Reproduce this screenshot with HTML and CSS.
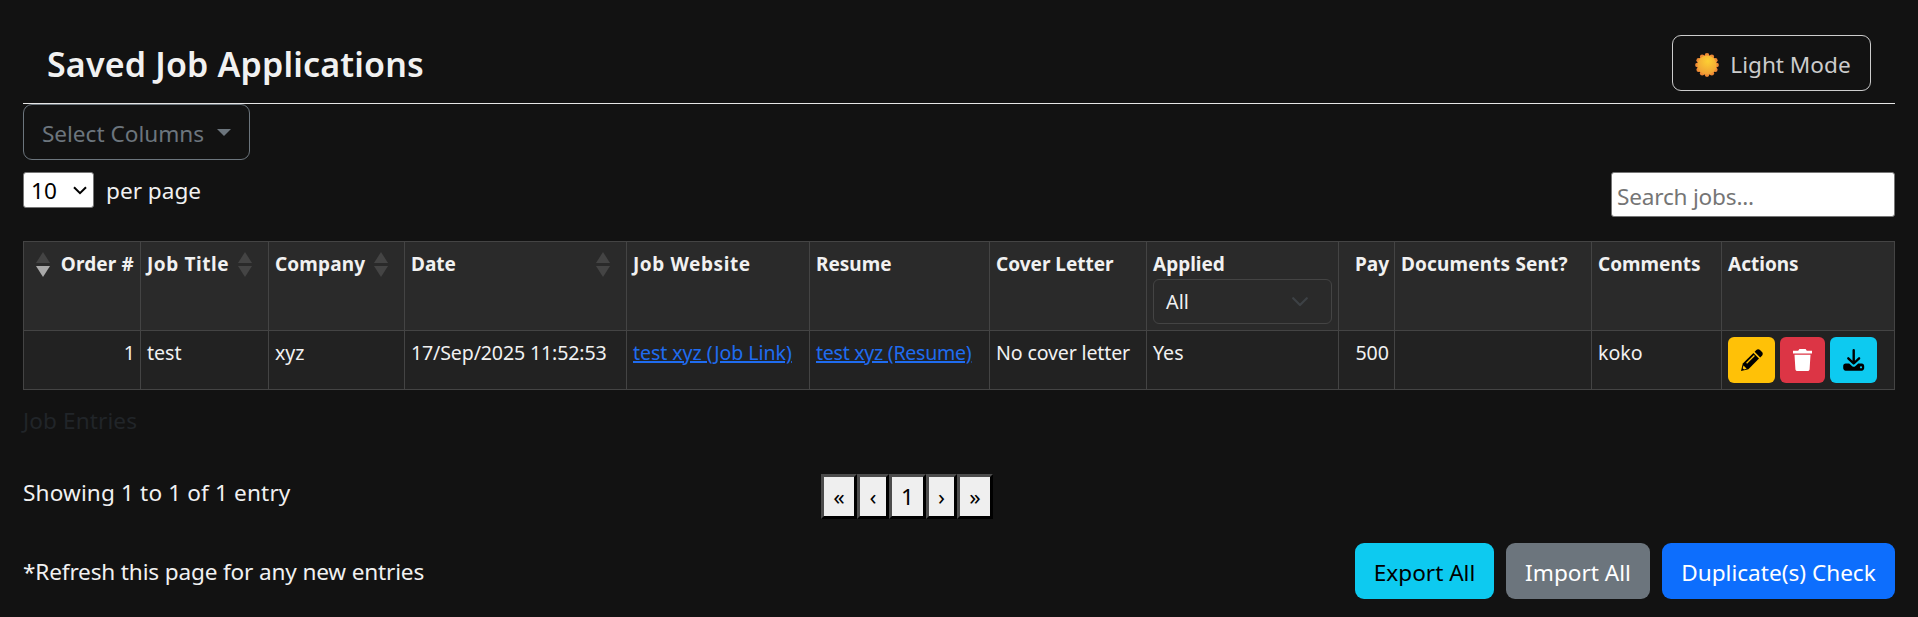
FILE: index.html
```html
<!DOCTYPE html>
<html lang="en">
<head>
<meta charset="utf-8">
<title>Saved Job Applications</title>
<link rel="stylesheet" href="styles.css">
</head>
<body>
<header class="header">
  <h1 class="title">Saved Job Applications</h1>
  <button class="btn btn-theme">
    <svg class="sun" width="24" height="24" viewBox="0 0 24 24">
      <defs><radialGradient id="sunFill" cx=".55" cy=".3" r=".7"><stop offset="0" stop-color="#fdcf33"/><stop offset="1" stop-color="#f0a035"/></radialGradient></defs>
      <g fill="#ee8a35"><circle cx="12" cy="12" r="10"/><circle cx="12" cy="2.4" r="2.3"/><circle cx="16.8" cy="3.7" r="2.3"/><circle cx="20.3" cy="7.2" r="2.3"/><circle cx="21.6" cy="12" r="2.3"/><circle cx="20.3" cy="16.8" r="2.3"/><circle cx="16.8" cy="20.3" r="2.3"/><circle cx="12" cy="21.6" r="2.3"/><circle cx="7.2" cy="20.3" r="2.3"/><circle cx="3.7" cy="16.8" r="2.3"/><circle cx="2.4" cy="12" r="2.3"/><circle cx="3.7" cy="7.2" r="2.3"/><circle cx="7.2" cy="3.7" r="2.3"/></g>
      <circle cx="12" cy="12" r="9.6" fill="url(#sunFill)"/>
    </svg>
    <span>Light Mode</span>
  </button>
</header>
<button class="btn btn-columns"><span>Select Columns</span><i class="caret"></i></button>
<div class="toolbar">
  <div class="page-size">
    <div class="size-select"><span>10</span><svg width="14" height="9" viewBox="0 0 14 9"><path d="M1 1.2l6 6 6-6" fill="none" stroke="#000" stroke-width="2"/></svg></div>
    <span class="per-page">per page</span>
  </div>
  <input class="search" placeholder="Search jobs...">
</div>
<table class="jobs">
  <colgroup><col class="c-order"><col class="c-title"><col class="c-company"><col class="c-date"><col class="c-site"><col class="c-resume"><col class="c-cover"><col class="c-applied"><col class="c-pay"><col class="c-docs"><col class="c-comments"><col class="c-actions"></colgroup>
  <thead>
    <tr>
      <th><div class="head head-num"><span class="sorter sorter-desc"></span><span class="h-normal">Order #</span></div></th>
      <th><div class="head"><span class="h-wide">Job Title</span><span class="sorter"></span></div></th>
      <th><div class="head"><span class="h-normal">Company</span><span class="sorter"></span></div></th>
      <th><div class="head"><span>Date</span><span class="sorter"></span></div></th>
      <th class="h-wide">Job Website</th>
      <th>Resume</th>
      <th>Cover Letter</th>
      <th>Applied
        <div class="filter"><span>All</span><svg width="16" height="10" viewBox="0 0 16 10"><path d="M1.2 1.2L8 8l6.800-6.800" fill="none" stroke="#3d4145" stroke-width="2.2" stroke-linecap="round" stroke-linejoin="round"/></svg></div>
      </th>
      <th class="num">Pay</th>
      <th class="h-normal">Documents Sent?</th>
      <th>Comments</th>
      <th>Actions</th>
    </tr>
  </thead>
  <tbody>
    <tr>
      <td class="num">1</td>
      <td>test</td>
      <td>xyz</td>
      <td class="t-date">17/Sep/2025 11:52:53</td>
      <td class="t-site"><a class="link" href="#">test xyz (Job Link)</a></td>
      <td class="t-resume"><a class="link" href="#">test xyz (Resume)</a></td>
      <td class="t-date">No cover letter</td>
      <td>Yes</td>
      <td class="num">500</td>
      <td></td>
      <td>koko</td>
      <td class="actions-cell">
        <div class="actions">
          <button class="act act-edit"><svg width="22" height="22" viewBox="0 0 22 22"><path d="M0 22l1.800-7.400L12.400 4l5.600 5.600L7.400 20.200z"/><path d="M13.600 2.800l1.700-1.700c1.100-1.100 2.600-1.100 3.700 0L21 3.100c1 1 1 2.500 0 3.600l-1.800 1.800z"/><path d="M5.600 14.300l7.800-7.800" stroke="#ffc107" stroke-width="1.300"/><path d="M2.500 16.500l3.200 3.200-2.700.8-1.300-1.300z" fill="#ffc107"/></svg></button>
          <button class="act act-delete"><svg width="19" height="22" viewBox="0 0 19 22"><path fill="#fff" d="M0 1.700h5.200L6.400 0h6.200l1.200 1.700H19v2.700H0zM1.500 5.800h16l-.9 14.400c-.1 1-.9 1.800-2 1.800H4.400c-1.100 0-1.900-.8-2-1.800z"/></svg></button>
          <button class="act act-download"><svg width="22" height="22" viewBox="0 0 22 22"><path d="M10.700 1.200v13M5.300 9.300l5.400 5.200 5.400-5.200" fill="none" stroke="#000" stroke-width="2.400" stroke-linecap="round" stroke-linejoin="round"/><path d="M2.600 14.500h3.600l3 2.700c.9.700 2.100.7 3 0l3-2.700h3.600c1.400 0 2.400 1.200 2.400 2.600v2c0 1.400-1 2.600-2.400 2.600H2.600C1.200 21.700.2 20.500.2 19.100v-2c0-1.400 1-2.600 2.400-2.600z"/><circle cx="18" cy="18.300" r="1.100" fill="#0dcaf0"/></svg></button>
        </div>
      </td>
    </tr>
  </tbody>
</table>
<div class="caption">Job Entries</div>
<div class="summary">
  <span class="showing">Showing 1 to 1 of 1 entry</span>
  <nav class="pager">
    <button class="pg pg-first">«</button><button class="pg pg-prev">‹</button><button class="pg pg-num">1</button><button class="pg pg-next">›</button><button class="pg pg-last">»</button>
  </nav>
</div>
<footer class="footer">
  <span class="note">*Refresh this page for any new entries</span>
  <div class="footer-actions">
    <button class="btn btn-export">Export All</button>
    <button class="btn btn-import">Import All</button>
    <button class="btn btn-check">Duplicate(s) Check</button>
  </div>
</footer>
</body>
</html>
```
FILE: styles.css
```css
* { box-sizing: border-box; }
body {
  margin: 0;
  padding: 0 23px;
  height: 617px;
  overflow: hidden;
  background: #121212;
  color: #f1f1f1;
  font: 22.6px/36px "Noto Sans", "Open Sans", sans-serif;
}
button, input { font: inherit; margin: 0; }
.header {
  display: flex;
  justify-content: space-between;
  align-items: flex-start;
  height: 104px;
  padding: 35px 24px 0 24px;
  border-bottom: 1px solid #e6e6e6;
}
.title {
  margin: 0;
  padding-top: 8px;
  font-size: 34px;
  line-height: 43px;
  font-weight: 600;
  letter-spacing: .17px;
}
.btn {
  display: flex;
  align-items: center;
  height: 56px;
  padding: 3px 0 0;
  justify-content: center;
  border: 1px solid transparent;
  border-radius: 9px;
  background: transparent;
  white-space: nowrap;
}
.btn-theme {
  width: 199px;
  padding-left: 3px;
  gap: 11px;
  border-color: #ccc;
  color: #ccc;
}
.btn-columns {
  width: 227px;
  gap: 13px;
  border-color: #6c757d;
  color: #6c757d;
}
.caret {
  margin-bottom: 2px;
  border-top: 7px solid #6c757d;
  border-left: 7px solid transparent;
  border-right: 7px solid transparent;
}
.toolbar {
  display: flex;
  justify-content: space-between;
  align-items: flex-start;
  height: 81px;
  padding-top: 12px;
}
.page-size { display: flex; gap: 12px; }
.size-select {
  display: flex;
  align-items: center;
  justify-content: space-between;
  width: 71px;
  height: 36px;
  padding: 2px 6px 0 7px;
  border: 1px solid #767676;
  border-radius: 3px;
  background: #fff;
  color: #000;
}
.size-select svg { margin-bottom: 2px; }
.per-page { line-height: 38px; }
.search {
  width: 284px;
  height: 45px;
  padding: 3px 5px 0;
  border: 1px solid #767676;
  border-radius: 3px;
  background: #fff;
  letter-spacing: -.2px;
}
.search::placeholder { color: #757575; opacity: 1; }
.jobs {
  width: 1872px;
  table-layout: fixed;
  border-collapse: separate;
  border-spacing: 0;
  border-top: 1px solid #444;
  border-left: 1px solid #444;
  font-size: 19.6px;
  line-height: 30px;
}
.c-order { width: 117px; }
.c-title { width: 128px; }
.c-company { width: 136px; }
.c-date { width: 222px; }
.c-site { width: 183px; }
.c-resume { width: 180px; }
.c-cover { width: 157px; }
.c-applied { width: 192px; }
.c-pay { width: 56px; }
.c-docs { width: 197px; }
.c-comments { width: 130px; }
.c-actions { width: 173px; }
.jobs th, .jobs td {
  padding: 7px 6px 0;
  border-right: 1px solid #444;
  border-bottom: 1px solid #444;
  text-align: left;
  vertical-align: top;
  white-space: nowrap;
}
.jobs th { height: 89px; background: #2a2a2a; font-weight: 700; font-size: 19px; }
.jobs td { height: 59px; background: #222; }
.jobs .num { text-align: right; padding-right: 5px; }
.jobs .actions-cell { padding-top: 6px; }
.h-normal { letter-spacing: .15px; }
.h-wide { letter-spacing: .58px; }
.t-date { letter-spacing: -.15px; }
.t-site { letter-spacing: -.07px; }
.t-resume { letter-spacing: -.28px; }
.head { display: flex; justify-content: space-between; padding-right: 10px; }
.head-num { padding: 0 0 0 6px; }
.sorter {
  display: flex;
  flex-direction: column;
  gap: 3px;
  padding-top: 3px;
}
.sorter::before, .sorter::after {
  content: "";
  width: 14px;
  height: 11px;
  background: #444;
  clip-path: polygon(50% 0, 100% 100%, 0 100%);
}
.sorter::after { clip-path: polygon(0 0, 100% 0, 50% 100%); }
.sorter-desc::after { background: #a9a9a9; }
.filter {
  display: flex;
  align-items: center;
  justify-content: space-between;
  width: 179px;
  height: 45px;
  padding: 1px 23px 0 12px;
  border: 1px solid #444;
  border-radius: 6px;
  font-size: 19.8px;
  font-weight: 400;
}
.link { color: #1f6cf0; text-decoration: underline; text-decoration-thickness: 2px; }
.actions { display: flex; gap: 5px; }
.act {
  display: flex;
  align-items: center;
  justify-content: center;
  width: 47px;
  height: 46px;
  padding: 0;
  border: 0;
  border-radius: 6px;
}
.act-edit { background: #ffc107; }
.act-delete { width: 45px; background: #dc3545; }
.act-download { background: #0dcaf0; }
.caption { padding-top: 12px; height: 84px; color: #212529; line-height: 38px; letter-spacing: .1px; }
.summary { display: grid; grid-template-columns: 798px auto; height: 69px; }
.showing { line-height: 38px; letter-spacing: .14px; }
.pager { display: flex; }
.pg {
  width: 36px;
  height: 45px;
  padding: 0;
  border: 3px solid;
  border-color: #4c4c4c #000 #000 #4c4c4c;
  background: #efefef;
  color: #000;
}
.pg-prev { width: 32px; }
.pg-num { width: 37px; }
.pg-next { width: 31px; }
.footer { display: flex; justify-content: space-between; align-items: center; height: 56px; }
.note { padding-top: 2px; letter-spacing: -.16px; }
.footer-actions { display: flex; gap: 12px; }
.btn-export { width: 139px; background: #0dcaf0; color: #000; }
.btn-import { width: 144px; background: #6c757d; color: #fff; }
.btn-check { width: 233px; background: #0d6efd; color: #fff; }
```
